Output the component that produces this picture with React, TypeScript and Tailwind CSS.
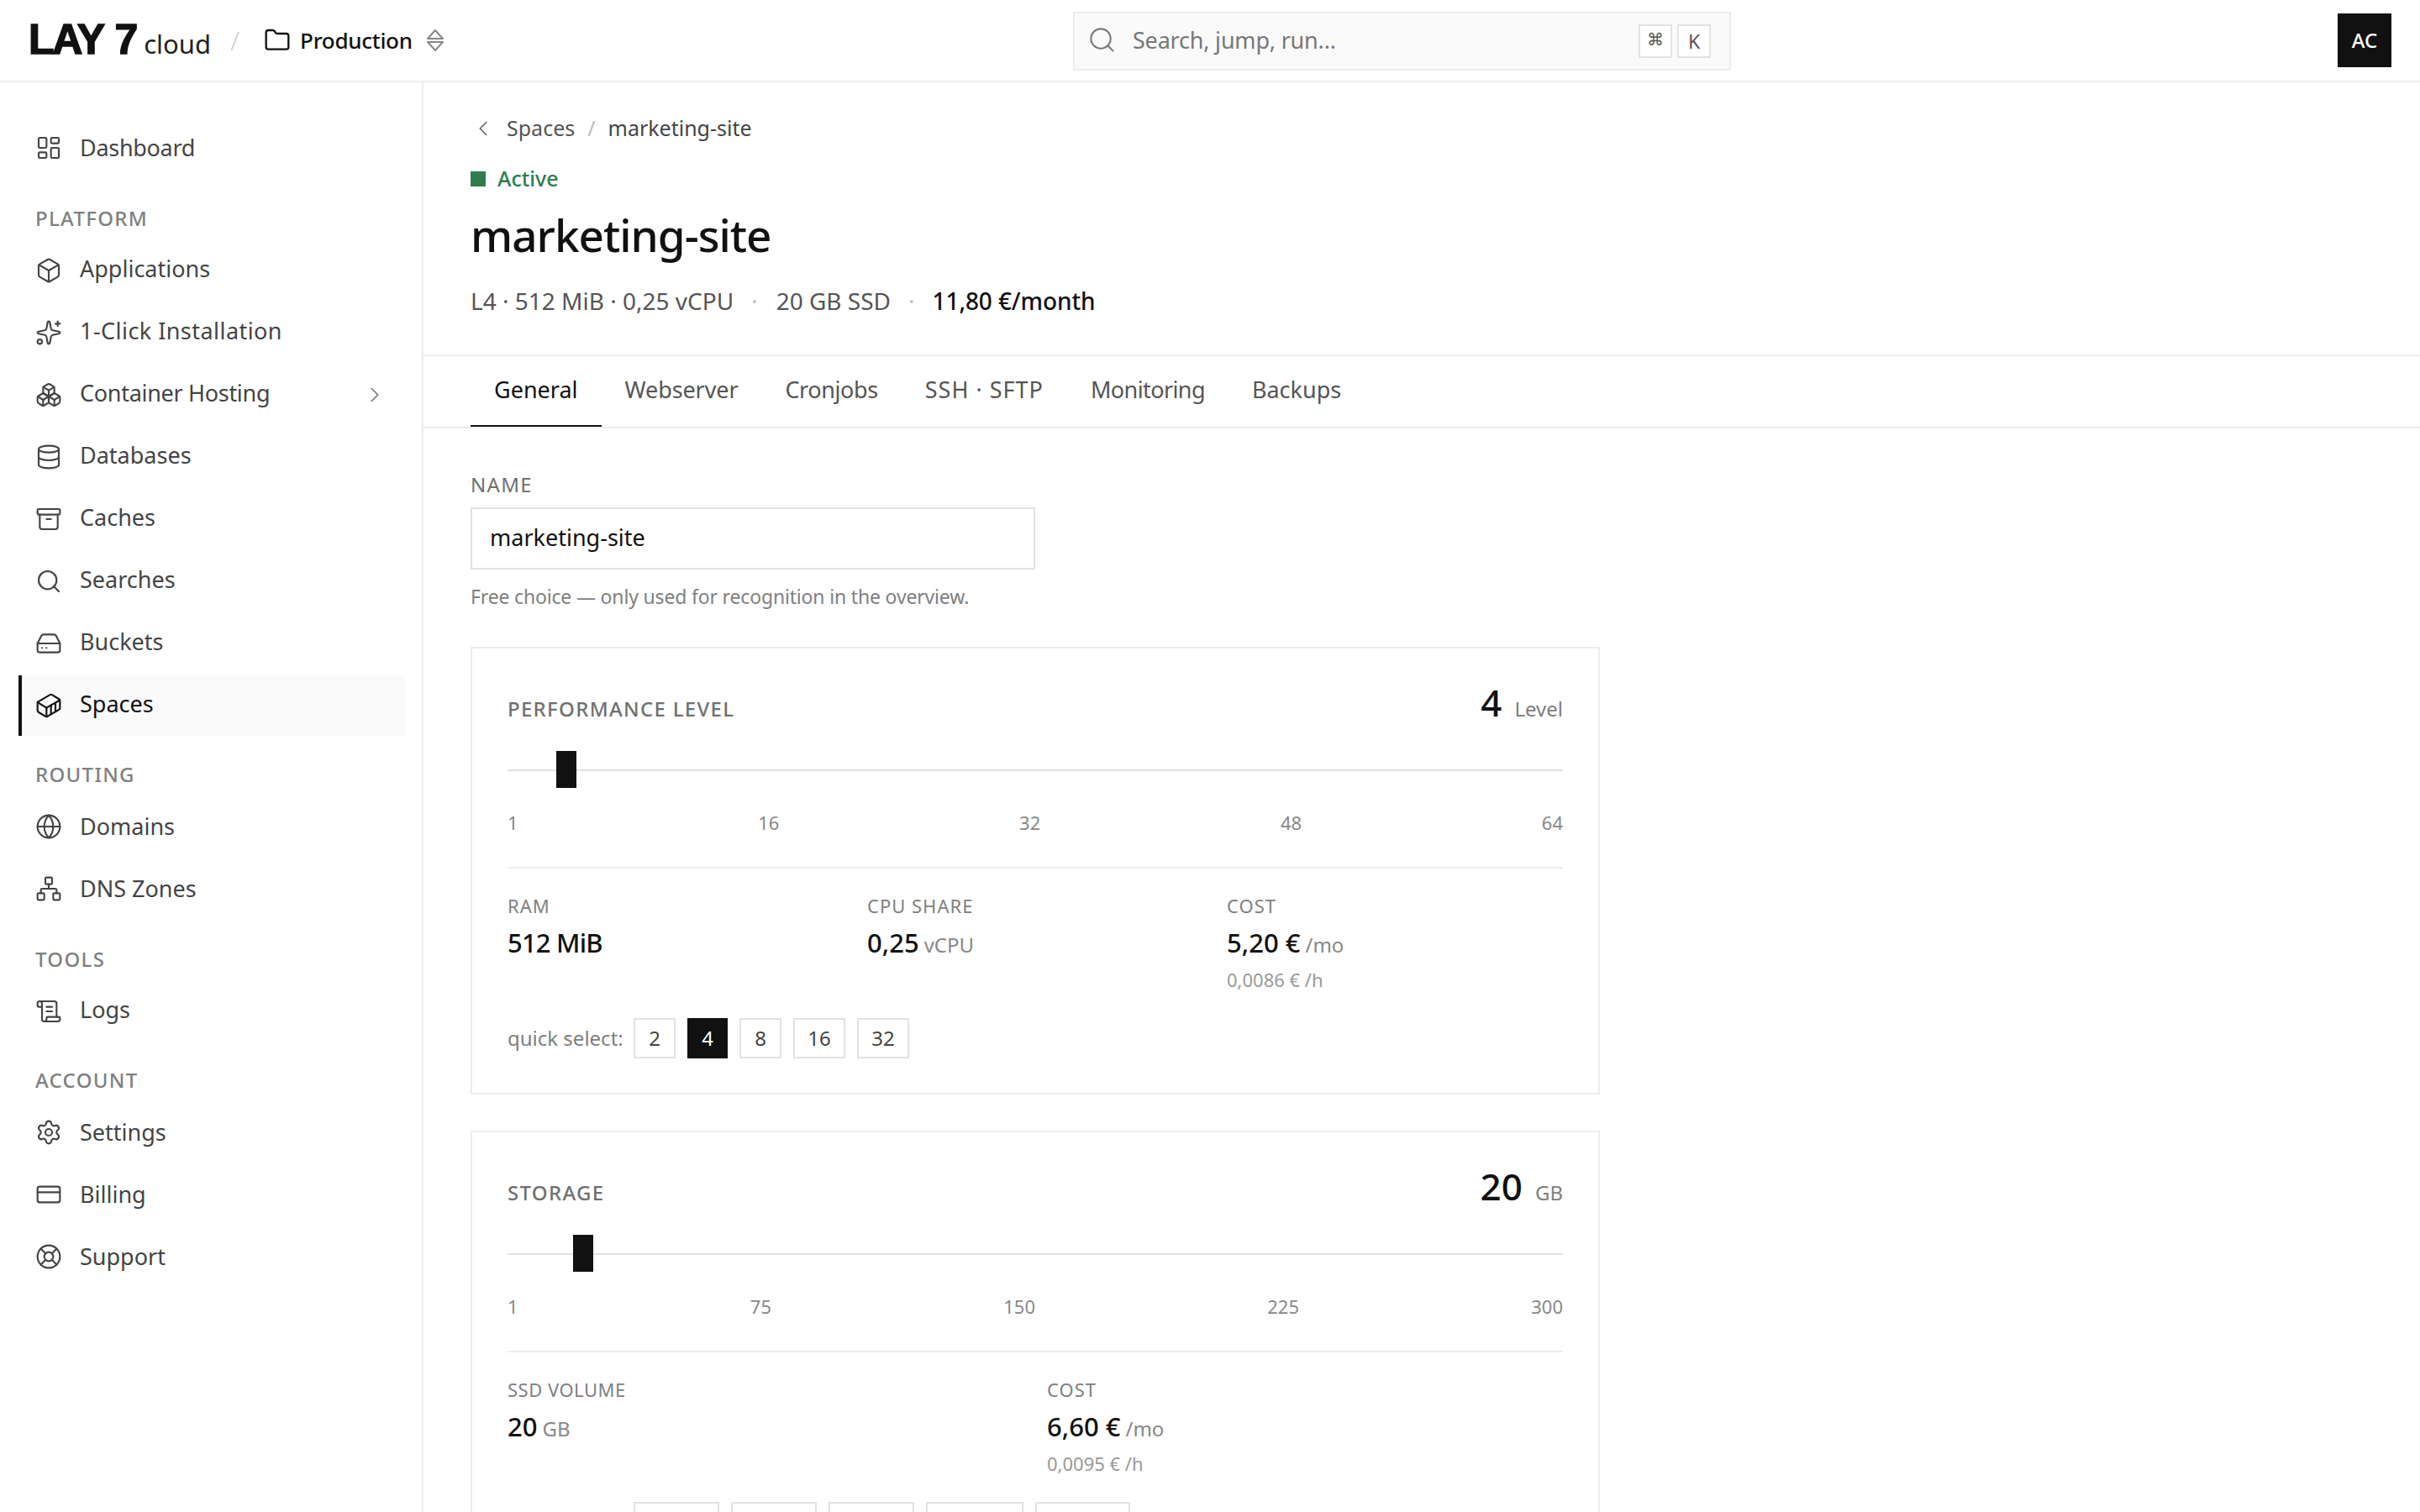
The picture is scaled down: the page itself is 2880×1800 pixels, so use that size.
import React from "react";
import {
  LayoutDashboard, Box, Sparkles, Boxes, Database, Archive, Search, HardDrive, Container,
  Globe, Network, ScrollText, Settings, CreditCard, LifeBuoy, Folder, ChevronRight, ChevronLeft,
} from "lucide-react";

type NavItem = { label: string; icon: React.ElementType; active?: boolean; chevron?: boolean; tw?: string };
type NavGroup = { title?: string; mt?: string; pb?: string; items: NavItem[] };

const groups: NavGroup[] = [
  { items: [{ label: "Dashboard", icon: LayoutDashboard, tw: "tracking-[-0.3px]" }] },
  {
    title: "PLATFORM",
    mt: "mt-[30px]",
    pb: "pb-[3px]",
    items: [
      { label: "Applications", icon: Box },
      { label: "1-Click Installation", icon: Sparkles, tw: "tracking-[0.45px]" },
      { label: "Container Hosting", icon: Boxes, chevron: true, tw: "tracking-[-0.3px]" },
      { label: "Databases", icon: Database },
      { label: "Caches", icon: Archive },
      { label: "Searches", icon: Search },
      { label: "Buckets", icon: HardDrive },
      { label: "Spaces", icon: Container, active: true },
    ],
  },
  {
    title: "ROUTING",
    mt: "mt-[28px]",
    items: [
      { label: "Domains", icon: Globe },
      { label: "DNS Zones", icon: Network },
    ],
  },
  { title: "TOOLS", mt: "mt-[30px]", pb: "pb-[3px]", items: [{ label: "Logs", icon: ScrollText }] },
  {
    title: "ACCOUNT",
    mt: "mt-[28px]",
    items: [
      { label: "Settings", icon: Settings },
      { label: "Billing", icon: CreditCard },
      { label: "Support", icon: LifeBuoy },
    ],
  },
];

function UpDown() {
  return (
    <svg width="20" height="28" viewBox="0 0 20 28" fill="none" stroke="#888" strokeWidth="2" strokeLinejoin="round">
      <path d="M10 2 L19 12 H1 Z" />
      <path d="M10 26 L19 16 H1 Z" />
    </svg>
  );
}

function Header() {
  return (
    <header className="h-[98px] shrink-0 border-b-2 border-[#ededed] flex items-center pl-[34px] pr-[34px] bg-white">
      <div className="w-[1243px] flex items-center">
        <div className="flex items-baseline w-[225px] pt-[3px]">
          <span className="font-['Liberation_Sans'] font-bold text-[50px] leading-[50px] tracking-[-2.2px] [word-spacing:3px] text-[#111] [-webkit-text-stroke:1.5px_#111]">LAY 7</span>
          <span className="ml-[9px] text-[31px] leading-[50px] text-[#222]">cloud</span>
        </div>
        <span className="ml-[15px] text-[32px] text-[#cfcfcf] font-light">/</span>
        <Folder size={32} strokeWidth={1.75} className="ml-[29px] text-[#111]" />
        <span className="ml-[11px] text-[26px] tracking-[-0.3px] font-medium text-[#111]">Production</span>
        <span className="ml-[17px] flex"><UpDown /></span>
      </div>
      <div className="mt-[2px] w-[783px] h-[70px] bg-[#fafafa] border-2 border-[#ededed] flex items-center pl-[15px] pr-[22px]">
        <Search size={35} strokeWidth={1.4} className="mb-[4px] text-[#777]" />
        <span className="ml-[19px] pb-[2px] text-[27px] tracking-[-0.2px] text-[#777]">Search, jump, run...</span>
        <div className="ml-auto flex gap-[6px]">
          <kbd className="w-[40px] h-[40px] bg-white border-2 border-[#e2e2e2] flex items-center justify-center font-['Liberation_Mono'] text-[20px] text-[#555]">⌘</kbd>
          <kbd className="w-[40px] h-[40px] bg-white border-2 border-[#e2e2e2] flex items-center justify-center font-['Noto_Sans'] text-[23px] text-[#555]">K</kbd>
        </div>
      </div>
      <div className="ml-auto w-[64px] h-[64px] bg-[#111] text-white text-[24px] font-medium flex items-center justify-center">AC</div>
    </header>
  );
}

function Sidebar() {
  return (
    <aside className="w-[504px] shrink-0 border-r-2 border-[#ededed] pt-[42px] pl-[22px] bg-white">
      {groups.map((g, i) => (
        <div key={i} className={g.mt}>
          {g.title && (
            <div className="h-[36px] mb-[8px] pl-[20px] flex items-center text-[24px] font-medium tracking-[1.3px] text-[#808080]">{g.title}</div>
          )}
          <div className="flex flex-col gap-[2px]">
            {g.items.map((it) => {
              const Icon = it.icon;
              return (
                <div
                  key={it.label}
                  className={
                    it.active
                      ? "w-[460px] h-[72px] flex items-center border-l-4 border-[#111] bg-[#fafafa] pl-[16px] text-[#111]"
                      : "w-[460px] h-[72px] flex items-center border-l-4 border-transparent pl-[16px] text-[#444]"
                  }
                >
                  <Icon size={32} strokeWidth={1.6} />
                  <span className={"ml-[21px] text-[27px] " + (g.pb ?? "") + " " + (it.tw ?? "")}>{it.label}</span>
                  {it.chevron && <ChevronRight size={30} strokeWidth={1.4} className="ml-auto mr-[21px] text-[#777]" />}
                </div>
              );
            })}
          </div>
        </div>
      ))}
    </aside>
  );
}

function Stat({ label, value, unit, sub, labelTw, valueTw }: { label: string; value: string; unit?: string; sub?: string; labelTw?: string; valueTw?: string }) {
  return (
    <div>
      <div className={"h-[30px] flex items-center text-[22px] text-[#808080] " + (labelTw ?? "tracking-[1px]")}>{label}</div>
      <div className="mt-[6px] h-[42px] flex items-baseline">
        <span className={"text-[31px] font-medium text-[#111] " + (valueTw ?? "")}>{value}</span>
        {unit && <span className="ml-[6px] text-[24px] text-[#888]">{unit}</span>}
      </div>
      {sub && <div className="mt-[10px] h-[30px] flex items-center text-[22px] text-[#999]">{sub}</div>}
    </div>
  );
}

function Card({
  title, big, bigUnit, thumb, ticks, stats, cols, label, buttons, active,
}: {
  title: string; big: string; bigUnit: string; thumb: number; ticks: string[];
  stats: React.ComponentProps<typeof Stat>[]; cols: string; label: string;
  buttons: { t: string; w: string }[]; active?: string;
}) {
  return (
    <section className="w-[1344px] border-2 border-[#ededed] px-[42px] pt-[31px] pb-[41px] bg-white">
      <div className="h-[69px] flex items-baseline justify-between">
        <span className="text-[24px] font-medium tracking-[1.3px] text-[#707070]">{title}</span>
        <span className="flex items-baseline">
          <span className="text-[44px] leading-[66px] font-medium text-[#111]">{big}</span>
          <span className="ml-[15px] text-[24px] text-[#808080]">{bigUnit}</span>
        </span>
      </div>
      <div className="mt-[22px] h-[44px] relative flex items-center">
        <div className="mt-[2px] w-full h-[2px] bg-[#e0e0e0]" />
        <div className="absolute top-0 w-[24px] h-[44px] bg-[#111]" style={{ left: thumb }} />
      </div>
      <div className="mt-[28px] h-[30px] pb-[3px] flex items-center justify-between text-[22px] text-[#888]">
        {ticks.map((t) => <span key={t}>{t}</span>)}
      </div>
      <div className="mt-[36px] h-[2px] bg-[#ededed]" />
      <div className={cols + " mt-[29px] h-[118px] gap-x-[28px]"}>
        {stats.map((s) => <Stat key={s.label} {...s} />)}
      </div>
      <div className="mt-[31px] flex items-center h-[48px]">
        <span className="w-[150px] text-[24px] text-[#808080]">{label}</span>
        <div className="flex gap-[14px]">
          {buttons.map((b) => (
            <span
              key={b.t}
              className={
                (b.t === active ? "bg-[#111] text-white " : "border-2 border-[#e2e2e2] text-[#444] ") +
                b.w + " h-[48px] flex items-center justify-center text-[24px]"
              }
            >
              {b.t}
            </span>
          ))}
        </div>
      </div>
    </section>
  );
}

const tabs = [
  { t: "General", tw: "" },
  { t: "Webserver", tw: "tracking-[-0.1px]" },
  { t: "Cronjobs", tw: "tracking-[-0.4px]" },
  { t: "SSH · SFTP", tw: "tracking-[1px]" },
  { t: "Monitoring", tw: "tracking-[-0.6px]" },
  { t: "Backups", tw: "" },
];

function Main() {
  return (
    <main className="flex-1 min-w-0 overflow-hidden bg-white">
      <div className="pl-[56px] pt-[37px] pb-[44px] border-b-2 border-[#ededed]">
        <div className="h-[36px] flex items-center text-[25px] text-[#555]">
          <ChevronLeft size={30} strokeWidth={1.4} className="text-[#666]" />
          <span className="ml-[13px]">Spaces</span>
          <span className="ml-[15px] text-[#bbb]">/</span>
          <span className="ml-[15px] text-[#444]">marketing-site</span>
        </div>
        <div className="mt-[28px] h-[28px] flex items-center">
          <span className="w-[18px] h-[18px] bg-[#2e7d4f]" />
          <span className="ml-[14px] text-[25px] font-medium text-[#2e7d4f]">Active</span>
        </div>
        <h1 className="mt-[17px] h-[72px] flex items-center text-[53px] font-medium tracking-[-1px] text-[#111]">marketing-site</h1>
        <div className="mt-[22px] h-[40px] flex items-center text-[28px] text-[#555]">
          <span>L4 · 512 MiB · 0,25 vCPU</span>
          <span className="ml-[21px] text-[#bbb]">·</span>
          <span className="ml-[22px]">20 GB SSD</span>
          <span className="ml-[21px] text-[#bbb]">·</span>
          <span className="ml-[21px] font-medium tracking-[-0.1px] text-[#111]">11,80 €/month</span>
        </div>
      </div>
      <nav className="h-[86px] pl-[56px] flex border-b-2 border-[#ededed]">
        {tabs.map((x, i) => (
          <div
            key={x.t}
            className={
              (i === 0
                ? "px-[28px] pb-[2px] h-[84px] flex items-center text-[27px] text-[#111] border-b-2 border-[#111] "
                : "px-[28px] pb-[4px] h-[84px] flex items-center text-[27px] text-[#555] ") + x.tw
            }
          >
            {x.t}
          </div>
        ))}
      </nav>
      <div className="pl-[56px] pt-[51px]">
        <div className="h-[32px] flex items-center text-[24px] tracking-[1.3px] text-[#707070]">NAME</div>
        <div className="mt-[11px] w-[672px] h-[74px] pb-[2px] border-2 border-[#e2e2e2] flex items-center pl-[21px] text-[27px] text-[#111]">marketing-site</div>
        <div className="mt-[16px] h-[32px] flex items-center text-[23px] tracking-[-0.17px] text-[#808080]">Free choice — only used for recognition in the overview.</div>
        <div className="mt-[44px] flex flex-col gap-[43px]">
          <Card
            title="PERFORMANCE LEVEL"
            big="4"
            bigUnit="Level"
            thumb={58}
            ticks={["1", "16", "32", "48", "64"]}
            cols="grid grid-cols-3"
            stats={[
              { label: "RAM", value: "512 MiB", valueTw: "tracking-[-0.8px]" },
              { label: "CPU SHARE", value: "0,25", unit: "vCPU" },
              { label: "COST", value: "5,20 €", unit: "/mo", sub: "0,0086 € /h" },
            ]}
            label="quick select:"
            buttons={[
              { t: "2", w: "w-[50px]" }, { t: "4", w: "w-[48px]" }, { t: "8", w: "w-[50px]" },
              { t: "16", w: "w-[62px]" }, { t: "32", w: "w-[62px]" },
            ]}
            active="4"
          />
          <Card
            title="STORAGE"
            big="20"
            bigUnit="GB"
            thumb={78}
            ticks={["1", "75", "150", "225", "300"]}
            cols="grid grid-cols-2"
            stats={[
              { label: "SSD VOLUME", value: "20", unit: "GB", labelTw: "tracking-[0.5px]" },
              { label: "COST", value: "6,60 €", unit: "/mo", sub: "0,0095 € /h" },
            ]}
            label="quick select:"
            buttons={[
              { t: "20 GB", w: "w-[102px]" }, { t: "50 GB", w: "w-[102px]" }, { t: "80 GB", w: "w-[102px]" },
              { t: "160 GB", w: "w-[116px]" }, { t: "300 GB", w: "w-[113px]" },
            ]}
          />
        </div>
      </div>
    </main>
  );
}

export default function App() {
  return (
    <div className="w-[2880px] h-[1800px] overflow-hidden flex flex-col bg-white font-['Noto_Sans',sans-serif]">
      <Header />
      <div className="flex flex-1 min-h-0">
        <Sidebar />
        <Main />
      </div>
    </div>
  );
}
